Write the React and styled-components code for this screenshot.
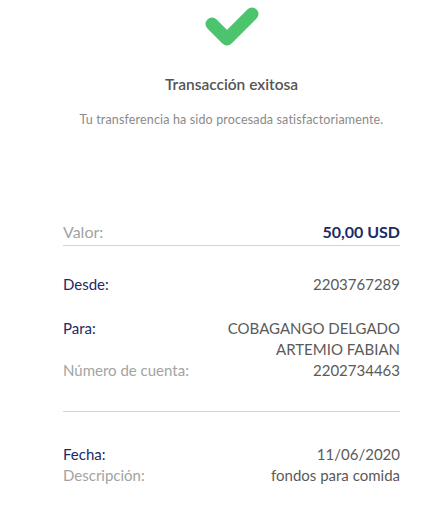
import styled, { createGlobalStyle } from "styled-components";

const GlobalStyle = createGlobalStyle`
  body {
    margin: 0;
    background: #ffffff;
    font-family: Lato, "Open Sans", sans-serif;
  }
`;

const Page = styled.div`
  width: 438px;
  height: 505px;
  box-sizing: border-box;
  padding: 0 38px 0 63px;
  display: flex;
  flex-direction: column;
  overflow: hidden;
`;

const Header = styled.div`
  display: flex;
  flex-direction: column;
  align-items: center;
  padding-top: 4px;
  margin: 0 -30px;
  .title {
    margin-top: 23px;
    font-size: 15.5px;
    color: #555;
    font-weight: 600;
  }
  .subtitle {
    margin-top: 19px;
    font-size: 12.5px;
    letter-spacing: 0.15px;
    color: #8a8a8a;
  }
`;

const Row = styled.div`
  display: flex;
  justify-content: space-between;
  align-items: flex-start;
  font-size: 15px;
  line-height: 21px;
  margin-top: ${({ top }) => top || 0}px;
  padding-bottom: ${({ underline }) => (underline ? "3px" : "0")};
  border-bottom: ${({ underline }) => (underline ? "1px solid #d4d4d4" : "none")};
`;

const Label = styled.span`
  color: ${({ muted }) => (muted ? "#a3a3a3" : "#1c2a66")};
  font-size: ${({ big }) => (big ? "16px" : "15px")};
`;

const Value = styled.span`
  text-align: right;
  color: ${({ strong }) => (strong ? "#1c2a66" : "#5a5a5a")};
  font-weight: ${({ strong }) => (strong ? 700 : 400)};
  font-size: ${({ strong }) => (strong ? "16px" : "15px")};
`;

const Divider = styled.div`
  height: 1px;
  background: #d4d4d4;
  margin-top: ${({ top }) => top}px;
`;

const Check = () => (
  <svg width="58" height="48" viewBox="0 0 58 48">
    <path
      d="M9 20 L24 35 L49 10"
      fill="none"
      stroke="#4cc46e"
      strokeWidth="13"
      strokeLinecap="round"
      strokeLinejoin="round"
    />
  </svg>
);

const App = () => {
  return (
    <>
      <GlobalStyle />
      <Page>
        <Header>
          <Check />
          <div className="title">Transacción exitosa</div>
          <div className="subtitle">
            Tu transferencia ha sido procesada satisfactoriamente.
          </div>
        </Header>

        <Row top={94} underline>
          <Label muted big>Valor:</Label>
          <Value strong>50,00 USD</Value>
        </Row>

        <Row top={28}>
          <Label>Desde:</Label>
          <Value>2203767289</Value>
        </Row>

        <Row top={23}>
          <Label>Para:</Label>
          <Value>
            COBAGANGO DELGADO
            <br />
            ARTEMIO FABIAN
          </Value>
        </Row>
        <Row>
          <Label muted>Número de cuenta:</Label>
          <Value>2202734463</Value>
        </Row>

        <Divider top={30} />

        <Row top={32}>
          <Label>Fecha:</Label>
          <Value>11/06/2020</Value>
        </Row>
        <Row>
          <Label muted>Descripción:</Label>
          <Value>fondos para comida</Value>
        </Row>
      </Page>
    </>
  );
};

export default App;
